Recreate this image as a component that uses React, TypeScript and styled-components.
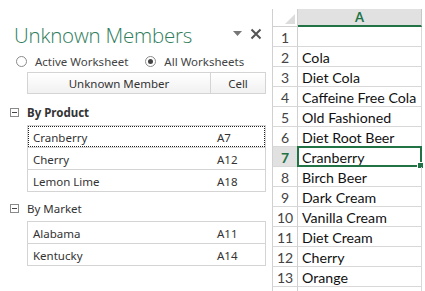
import React from "react";
import styled, { createGlobalStyle } from "styled-components";

const Global = createGlobalStyle`
  html, body { margin: 0; padding: 0; background: #fff; }
  body { font-family: "Noto Sans", "Open Sans", sans-serif; overflow: hidden; }
  * { box-sizing: border-box; }
`;

const Page = styled.div`
  display: flex;
  width: 425px;
  height: 291px;
  overflow: hidden;
  background: #fff;
`;

const Pane = styled.div`
  width: 272px;
  flex: none;
  display: flex;
  flex-direction: column;
  padding-top: 20px;
`;

const TitleRow = styled.div`
  display: flex;
  align-items: center;
  height: 30px;
  padding-left: 14px;
  padding-right: 10px;
`;

const Title = styled.div`
  flex: 1;
  font-family: "Open Sans", sans-serif;
  font-weight: 300;
  font-size: 20.5px;
  color: #2f7d5c;
  letter-spacing: -0.2px;
  white-space: nowrap;
`;

const PaneIcons = styled.div`
  display: flex;
  align-items: center;
  gap: 8px;
  margin-top: -2px;
`;

const RadioRow = styled.div`
  display: flex;
  align-items: center;
  height: 22px;
  padding-left: 16px;
  font-size: 11.5px;
  color: #444;
`;

const RadioLabel = styled.label<{ $gap?: number }>`
  display: flex;
  align-items: center;
  gap: 8px;
  margin-right: ${(p) => p.$gap ?? 0}px;
  white-space: nowrap;
`;

const RadioCircle = styled.span<{ $checked?: boolean }>`
  width: 11px;
  height: 11px;
  border-radius: 50%;
  border: 1px solid #8a8a8a;
  background: #fff;
  display: flex;
  align-items: center;
  justify-content: center;
  &::after {
    content: "";
    width: 5px;
    height: 5px;
    border-radius: 50%;
    background: ${(p) => (p.$checked ? "#444" : "transparent")};
  }
`;

const ListHeader = styled.div`
  display: flex;
  margin: 0 6px 0 27px;
  height: 22px;
  border: 1px solid #d4d4d4;
  background: linear-gradient(#ffffff, #f1f1f1);
  font-size: 11.5px;
  color: #333;
`;

const HeaderCell = styled.div<{ $w?: number }>`
  ${(p) => (p.$w ? `width: ${p.$w}px; flex: none;` : "flex: 1;")}
  display: flex;
  align-items: center;
  justify-content: center;
  & + & { border-left: 1px solid #d4d4d4; }
`;

const Group = styled.div`
  display: flex;
  flex-direction: column;
`;

const GroupTitle = styled.div<{ $bold?: boolean; $top: number }>`
  display: flex;
  align-items: center;
  gap: 8px;
  height: 20px;
  margin-top: ${(p) => p.$top}px;
  margin-bottom: 3px;
  padding-left: 10px;
  font-size: 11.5px;
  font-weight: ${(p) => (p.$bold ? 700 : 400)};
  color: #333;
`;

const MinusBox = styled.span`
  width: 9px;
  height: 9px;
  border: 1px solid #8a8a8a;
  position: relative;
  &::after {
    content: "";
    position: absolute;
    left: 1px;
    right: 1px;
    top: 3px;
    height: 1px;
    background: #444;
  }
`;

const Table = styled.div`
  margin: 0 6px 0 27px;
  border: 1px solid #d4d4d4;
`;

const Row = styled.div<{ $focus?: boolean }>`
  display: flex;
  align-items: center;
  height: 22px;
  padding-top: 1px;
  font-size: 11.5px;
  color: #333;
  border-top: 1px solid #d4d4d4;
  &:first-child { border-top: none; height: 21px; }
  ${(p) => (p.$focus ? "outline: 1px dotted #222; outline-offset: -1px;" : "")}
`;

const Name = styled.div`
  flex: 1;
  padding-left: 5px;
`;

const Ref = styled.div`
  width: 48px;
  flex: none;
`;

const Sheet = styled.div`
  flex: 1;
  display: flex;
  flex-direction: column;
  padding-top: 9px;
  font-family: "Lato", sans-serif;
`;

const SheetRow = styled.div`
  display: flex;
  height: 20px;
  flex: none;
`;

const HeadRow = styled.div`
  display: flex;
  height: 18px;
  flex: none;
`;

const Corner = styled.div`
  width: 26px;
  flex: none;
  border-left: 1px solid #d0d0d0;
  border-right: 1px solid #d0d0d0;
  border-bottom: 1px solid #d0d0d0;
  background: #fff;
  position: relative;
  &::after {
    content: "";
    position: absolute;
    right: 2px;
    bottom: 2px;
    border-style: solid;
    border-width: 0 0 10px 10px;
    border-color: transparent transparent #dcdcdc transparent;
  }
`;

const ColHead = styled.div`
  width: 124px;
  flex: none;
  background: #e1e1e1;
  border-bottom: 2px solid #217346;
  border-right: 1px solid #c6c6c6;
  color: #217346;
  font-weight: 700;
  font-size: 13px;
  display: flex;
  align-items: center;
  justify-content: center;
`;

const RowNum = styled.div<{ $sel?: boolean }>`
  width: 26px;
  flex: none;
  display: flex;
  align-items: center;
  justify-content: center;
  padding-top: 2px;
  font-size: 14px;
  border-left: 1px solid #d0d0d0;
  border-right: 1px solid ${(p) => (p.$sel ? "#217346" : "#d0d0d0")};
  border-bottom: 1px solid #d8d8d8;
  background: ${(p) => (p.$sel ? "#e1e1e1" : "#fff")};
  color: ${(p) => (p.$sel ? "#217346" : "#444")};
  font-weight: ${(p) => (p.$sel ? 700 : 400)};
`;

const Cell = styled.div`
  width: 124px;
  flex: none;
  display: flex;
  align-items: center;
  padding-left: 4px;
  padding-top: 2px;
  font-size: 14.2px;
  color: #111;
  border-bottom: 1px solid #d8d8d8;
  border-right: 1px solid #d8d8d8;
  white-space: nowrap;
  position: relative;
`;

const Selection = styled.div`
  position: absolute;
  left: -1px;
  top: -1px;
  right: -1px;
  bottom: -1px;
  border: 2px solid #217346;
  pointer-events: none;
  &::after {
    content: "";
    position: absolute;
    right: -4px;
    bottom: -4px;
    width: 5px;
    height: 5px;
    background: #217346;
    border: 1px solid #fff;
  }
`;

const cells = [
  "",
  "Cola",
  "Diet Cola",
  "Caffeine Free Cola",
  "Old Fashioned",
  "Diet Root Beer",
  "Cranberry",
  "Birch Beer",
  "Dark Cream",
  "Vanilla Cream",
  "Diet Cream",
  "Cherry",
  "Orange",
];

export default function App() {
  return (
    <Page>
      <Global />
      <Pane>
        <TitleRow>
          <Title>Unknown Members</Title>
          <PaneIcons>
            <svg width="9" height="6" viewBox="0 0 9 6">
              <path d="M0 0 H9 L4.5 5 Z" fill="#777" />
            </svg>
            <svg width="12" height="12" viewBox="0 0 12 12">
              <path d="M1.5 1.5 L10.5 10.5 M10.5 1.5 L1.5 10.5" stroke="#555" strokeWidth="2" />
            </svg>
          </PaneIcons>
        </TitleRow>
        <RadioRow>
          <RadioLabel $gap={17}>
            <RadioCircle />
            Active Worksheet
          </RadioLabel>
          <RadioLabel>
            <RadioCircle $checked />
            All Worksheets
          </RadioLabel>
        </RadioRow>
        <ListHeader>
          <HeaderCell>Unknown Member</HeaderCell>
          <HeaderCell $w={55}>Cell</HeaderCell>
        </ListHeader>
        <Group>
          <GroupTitle $bold $top={8}>
            <MinusBox />
            By Product
          </GroupTitle>
          <Table>
            <Row $focus>
              <Name>Cranberry</Name>
              <Ref>A7</Ref>
            </Row>
            <Row>
              <Name>Cherry</Name>
              <Ref>A12</Ref>
            </Row>
            <Row>
              <Name>Lemon Lime</Name>
              <Ref>A18</Ref>
            </Row>
          </Table>
        </Group>
        <Group>
          <GroupTitle $top={6}>
            <MinusBox />
            By Market
          </GroupTitle>
          <Table>
            <Row>
              <Name>Alabama</Name>
              <Ref>A11</Ref>
            </Row>
            <Row>
              <Name>Kentucky</Name>
              <Ref>A14</Ref>
            </Row>
          </Table>
        </Group>
      </Pane>
      <Sheet>
        <HeadRow>
          <Corner />
          <ColHead>A</ColHead>
        </HeadRow>
        {cells.map((c, i) => (
          <SheetRow key={i}>
            <RowNum $sel={i === 6}>{i + 1}</RowNum>
            <Cell>
              {c}
              {i === 6 && <Selection />}
            </Cell>
          </SheetRow>
        ))}
        <SheetRow>
          <RowNum />
          <Cell />
        </SheetRow>
      </Sheet>
    </Page>
  );
}
